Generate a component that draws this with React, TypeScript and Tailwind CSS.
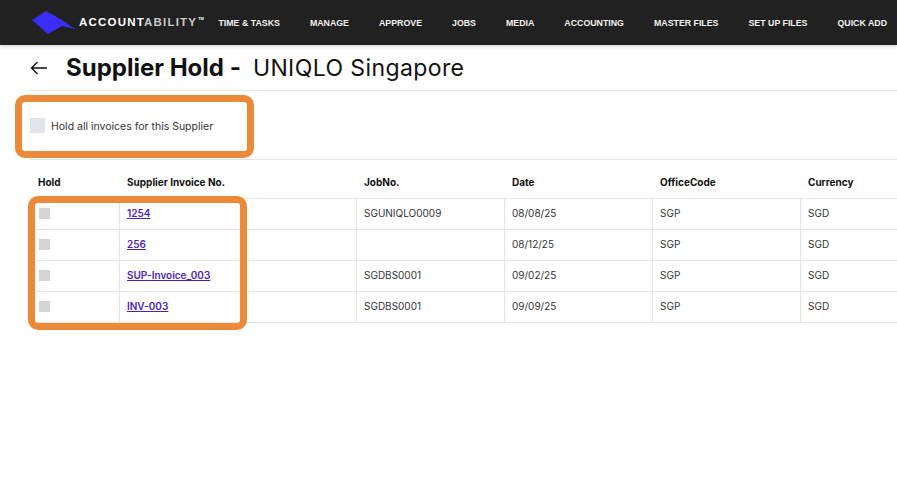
const navItems = ["TIME & TASKS", "MANAGE", "APPROVE", "JOBS", "MEDIA", "ACCOUNTING", "MASTER FILES", "SET UP FILES", "QUICK ADD"];

const rows = [
  { invoice: "1254", job: "SGUNIQLO0009", date: "08/08/25" },
  { invoice: "256", job: "", date: "08/12/25" },
  { invoice: "SUP-Invoice_003", job: "SGDBS0001", date: "09/02/25" },
  { invoice: "INV-003", job: "SGDBS0001", date: "09/09/25" },
];

const columns = "grid grid-cols-[89px_237px_148px_148px_148px_97px]";

export default function App() {
  return (
    <div className="relative h-[501px] w-[897px] overflow-hidden bg-white font-['Inter',sans-serif] text-[#212121]">
      <header className="flex h-[45px] items-center justify-between bg-[#212121] pl-[31px] pr-[10px] shadow-[0_1px_4px_rgba(0,0,0,0.2)]">
        <div className="flex items-center">
          <svg width="46" height="24" viewBox="0 0 46 24" className="mr-[2px]">
            <polygon points="1,9 15,0 31,9 44,18 31,15 17,23" fill="#3a2df5" />
          </svg>
          <span className="font-['Liberation_Sans',sans-serif] text-[11.5px] font-bold tracking-[1.2px] text-white">
            ACCOUNT<span className="text-[#c9c9c9]">ABILITY</span>
            <span className="ml-[1px] align-[6px] text-[4px] tracking-normal">TM</span>
          </span>
        </div>
        <nav className="flex gap-[30px] pt-[2px] font-['Liberation_Sans',sans-serif] text-[8.8px] font-bold text-[#f2f2f2]">
          {navItems.map((item) => (
            <span key={item}>{item}</span>
          ))}
        </nav>
      </header>

      <div className="ml-[30px] flex h-[46px] items-center border-b border-[#e5e5e5] pt-[1px]">
        <svg width="18" height="14" viewBox="0 0 18 14" fill="none" stroke="#111" strokeWidth="1.4">
          <path d="M17 7H1.5M7.5 1L1.5 7l6 6" />
        </svg>
        <h1 className="ml-[18px] text-[24px] font-bold text-[#111]">Supplier Hold -</h1>
        <span className="ml-[12px] text-[23px] tracking-[0.4px] text-[#111]">UNIQLO Singapore</span>
      </div>

      <div className="ml-[30px] flex h-[69px] items-center gap-[6px] border-b border-[#e5e5e5]">
        <div className="h-[15px] w-[15px] bg-[#e2e4ea]" />
        <span className="mt-[4px] text-[10.5px] text-[#333]">Hold all invoices for this Supplier</span>
      </div>

      <div className="ml-[30px] mt-[6px]">
        <div className={`${columns} h-[33px] items-center border-b border-[#e5e5e5] text-[10px] font-bold text-[#111]`}>
          <div className="pl-[8px]">Hold</div>
          <div className="pl-[8px]">Supplier Invoice No.</div>
          <div className="pl-[8px]">JobNo.</div>
          <div className="pl-[8px]">Date</div>
          <div className="pl-[8px]">OfficeCode</div>
          <div className="pl-[8px]">Currency</div>
        </div>
        {rows.map((row) => (
          <div key={row.invoice} className={`${columns} h-[31px] border-b border-[#e5e5e5] text-[10px] text-[#333]`}>
            <div className="flex items-center pb-[1px] pl-[9px]">
              <div className="h-[11px] w-[11px] bg-[#d4d4d4]" />
            </div>
            <div className="flex items-center border-l border-[#e5e5e5] pb-[1px] pl-[7px]">
              <a className="font-semibold text-[#4b1fb8] underline">{row.invoice}</a>
            </div>
            <div className="flex items-center border-l border-[#e5e5e5] pb-[1px] pl-[7px]">{row.job}</div>
            <div className="flex items-center border-l border-[#e5e5e5] pb-[1px] pl-[7px]">{row.date}</div>
            <div className="flex items-center border-l border-[#e5e5e5] pb-[1px] pl-[7px]">SGP</div>
            <div className="flex items-center border-l border-[#e5e5e5] pb-[1px] pl-[7px]">SGD</div>
          </div>
        ))}
      </div>

      {/* orange callouts drawn over the page */}
      <div className="absolute left-[15px] top-[95px] h-[63px] w-[239px] rounded-[10px] border-[7px] border-[#ec8a3a]" />
      <div className="absolute left-[28px] top-[196px] h-[134px] w-[219px] rounded-[10px] border-[7px] border-[#ec8a3a]" />
    </div>
  );
}
